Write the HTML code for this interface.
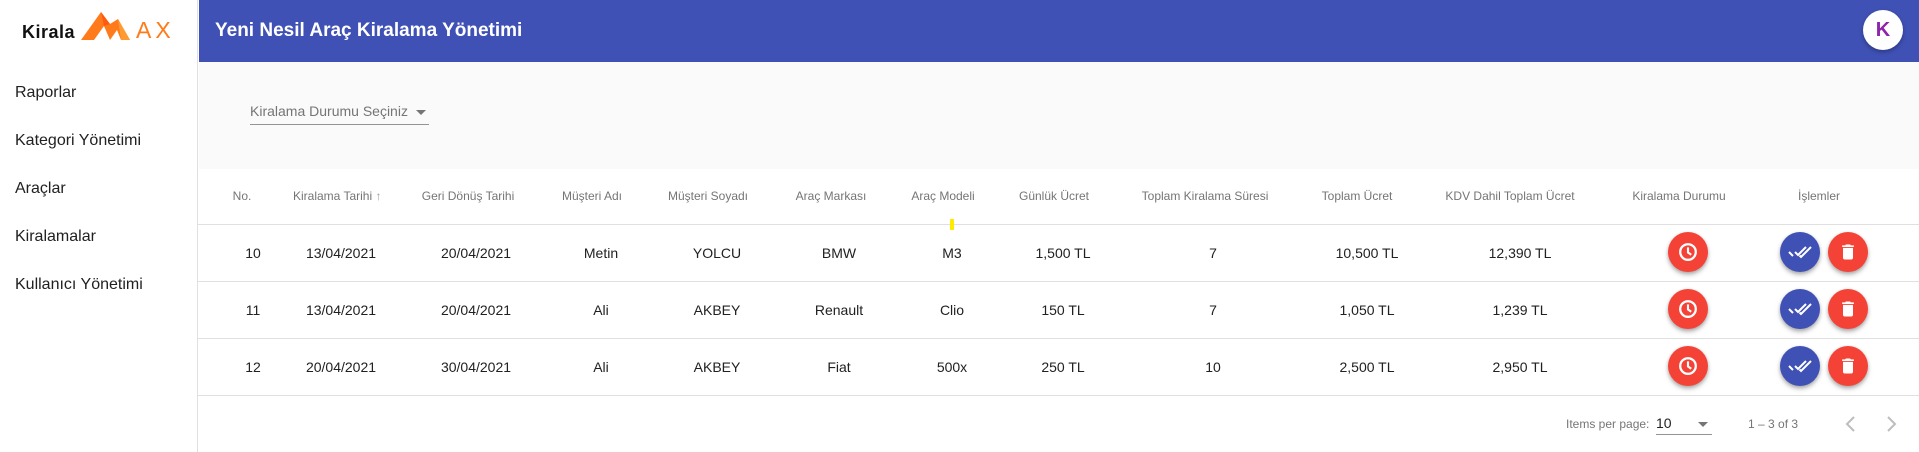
<!DOCTYPE html>
<html><head><meta charset="utf-8"><style>
*{margin:0;padding:0;box-sizing:border-box}
body{width:1919px;height:452px;overflow:hidden;background:#fff;font-family:"Liberation Sans",Arial,sans-serif;position:relative}
.a{position:absolute;white-space:nowrap}
.c{transform:translateX(-50%)}
.nav{left:15px;font-size:16px;color:#212121;line-height:20px}
.h{font-size:12px;color:#757575;top:189px;line-height:14px}
.v{font-size:14px;color:#212121;line-height:16px}
.line{position:absolute;left:198px;width:1721px;height:1px;background:#e0e0e0}
.btn{position:absolute;width:40px;height:40px;border-radius:50%;box-shadow:0 3px 5px rgba(0,0,0,.25),0 1px 3px rgba(0,0,0,.15);display:flex;align-items:center;justify-content:center}
.red{background:#f44336}.blue{background:#3f51b5}
</style></head><body>
<!-- sidebar -->
<div class="a" style="left:0;top:0;width:198px;height:452px;border-right:1px solid #e0e0e0;background:#fff"></div>
<div class="a" style="left:22px;top:22px;font-size:18px;font-weight:bold;color:#111;letter-spacing:0.5px">Kirala</div>
<svg class="a" style="left:81px;top:11px" width="52" height="30" viewBox="0 0 52 30">
<polygon points="0,29 20,1 29,13 37,8 49,29 40,29 36,19 29,29 23,15 13,29" fill="#ff7a1a"/>
<polygon points="20,1 29,13 23,15" fill="#ff5a10"/>
<polygon points="37,8 49,29 40,29" fill="#ff9a30"/>
</svg>
<div class="a" style="left:136px;top:17px;font-size:23px;color:#ff7a1a;letter-spacing:4px">AX</div>
<div class="a nav" style="top:83px">Raporlar</div>
<div class="a nav" style="top:131px">Kategori Yönetimi</div>
<div class="a nav" style="top:179px">Araçlar</div>
<div class="a nav" style="top:227px">Kiralamalar</div>
<div class="a nav" style="top:275px">Kullanıcı Yönetimi</div>
<!-- header -->
<div class="a" style="left:199px;top:0;width:1720px;height:62px;background:#3f51b5"></div>
<div class="a" style="left:215px;top:20px;font-size:19px;font-weight:bold;color:#fff">Yeni Nesil Araç Kiralama Yönetimi</div>
<div class="a" style="left:1863px;top:10px;width:40px;height:40px;border-radius:50%;background:#fff;box-shadow:0 2px 4px rgba(0,0,0,.3);color:#8e24aa;font-weight:bold;font-size:20px;text-align:center;line-height:40px">K</div>
<!-- filter -->
<div class="a" style="left:199px;top:62px;width:1720px;height:107px;background:#fafafa"></div>
<div class="a" style="left:250px;top:103px;font-size:14px;color:#757575">Kiralama Durumu Seçiniz</div>
<div class="a" style="left:416px;top:110px;width:0;height:0;border-left:5px solid transparent;border-right:5px solid transparent;border-top:5px solid #757575"></div>
<div class="a" style="left:250px;top:124px;width:179px;height:1px;background:#949494"></div>
<!-- table header -->
<div class="a h c" style="left:242px">No.</div>
<div class="a h" style="left:293px">Kiralama Tarihi <span style="color:#9e9e9e">↑</span></div>
<div class="a h c" style="left:468px">Geri Dönüş Tarihi</div>
<div class="a h c" style="left:592px">Müşteri Adı</div>
<div class="a h c" style="left:708px">Müşteri Soyadı</div>
<div class="a h c" style="left:831px">Araç Markası</div>
<div class="a h c" style="left:943px">Araç Modeli</div>
<div class="a h c" style="left:1054px">Günlük Ücret</div>
<div class="a h c" style="left:1205px">Toplam Kiralama Süresi</div>
<div class="a h c" style="left:1357px">Toplam Ücret</div>
<div class="a h c" style="left:1510px">KDV Dahil Toplam Ücret</div>
<div class="a h c" style="left:1679px">Kiralama Durumu</div>
<div class="a h c" style="left:1819px">İşlemler</div>
<div class="line" style="top:224px"></div>
<div class="a" style="left:950px;top:219px;width:4px;height:11px;background:#ffeb00"></div>
<div class="line" style="top:281px"></div>
<div class="line" style="top:338px"></div>
<div class="line" style="top:395px"></div>
<div id="rows"></div>
<script>
var d=[["10","13/04/2021","20/04/2021","Metin","YOLCU","BMW","M3","1,500 TL","7","10,500 TL","12,390 TL"],
["11","13/04/2021","20/04/2021","Ali","AKBEY","Renault","Clio","150 TL","7","1,050 TL","1,239 TL"],
["12","20/04/2021","30/04/2021","Ali","AKBEY","Fiat","500x","250 TL","10","2,500 TL","2,950 TL"]];
var xs=[253,341,476,601,717,839,952,1063,1213,1367,1520];
var h="";
d.forEach(function(r,i){var y=224+57*i;var ty=y+21;
r.forEach(function(t,j){h+='<div class="a v c" style="left:'+xs[j]+'px;top:'+ty+'px">'+t+'</div>';});
var by=y+8;
h+='<div class="btn red" style="left:1668px;top:'+by+'px"><svg width="22" height="22" viewBox="0 0 24 24"><circle cx="12" cy="12" r="8.5" fill="none" stroke="#fff" stroke-width="2.5"/><path d="M12 7v5.5l3.5 2.5" fill="none" stroke="#fff" stroke-width="2.3"/></svg></div>';
h+='<div class="btn blue" style="left:1780px;top:'+by+'px"><svg width="24" height="24" viewBox="0 0 24 24"><path d="M18 7l-8 8-3-3M23 7l-10 10-1.5-1.5M1 12l4 4" fill="none" stroke="#fff" stroke-width="2"/></svg></div>';
h+='<div class="btn red" style="left:1828px;top:'+by+'px"><svg width="20" height="20" viewBox="0 0 24 24"><path d="M6 19c0 1.1.9 2 2 2h8c1.1 0 2-.9 2-2V7H6v12zM19 4h-3.5l-1-1h-5l-1 1H5v2h14V4z" fill="#fff"/></svg></div>';
});
document.getElementById("rows").innerHTML=h;
</script>
<!-- paginator -->
<div class="a" style="left:1566px;top:417px;font-size:12px;color:#757575">Items per page:</div>
<div class="a" style="left:1656px;top:415px;font-size:14px;color:#212121">10</div>
<div class="a" style="left:1698px;top:422px;width:0;height:0;border-left:5px solid transparent;border-right:5px solid transparent;border-top:5px solid #757575"></div>
<div class="a" style="left:1656px;top:434px;width:56px;height:1px;background:#949494"></div>
<div class="a" style="left:1748px;top:417px;font-size:12px;color:#757575">1 – 3 of 3</div>
<svg class="a" style="left:1843px;top:415px" width="16" height="18" viewBox="0 0 16 18"><path d="M11 2L4 9l7 7" fill="none" stroke="#bdbdbd" stroke-width="2"/></svg>
<svg class="a" style="left:1883px;top:415px" width="16" height="18" viewBox="0 0 16 18"><path d="M5 2l7 7-7 7" fill="none" stroke="#bdbdbd" stroke-width="2"/></svg>
</body></html>
